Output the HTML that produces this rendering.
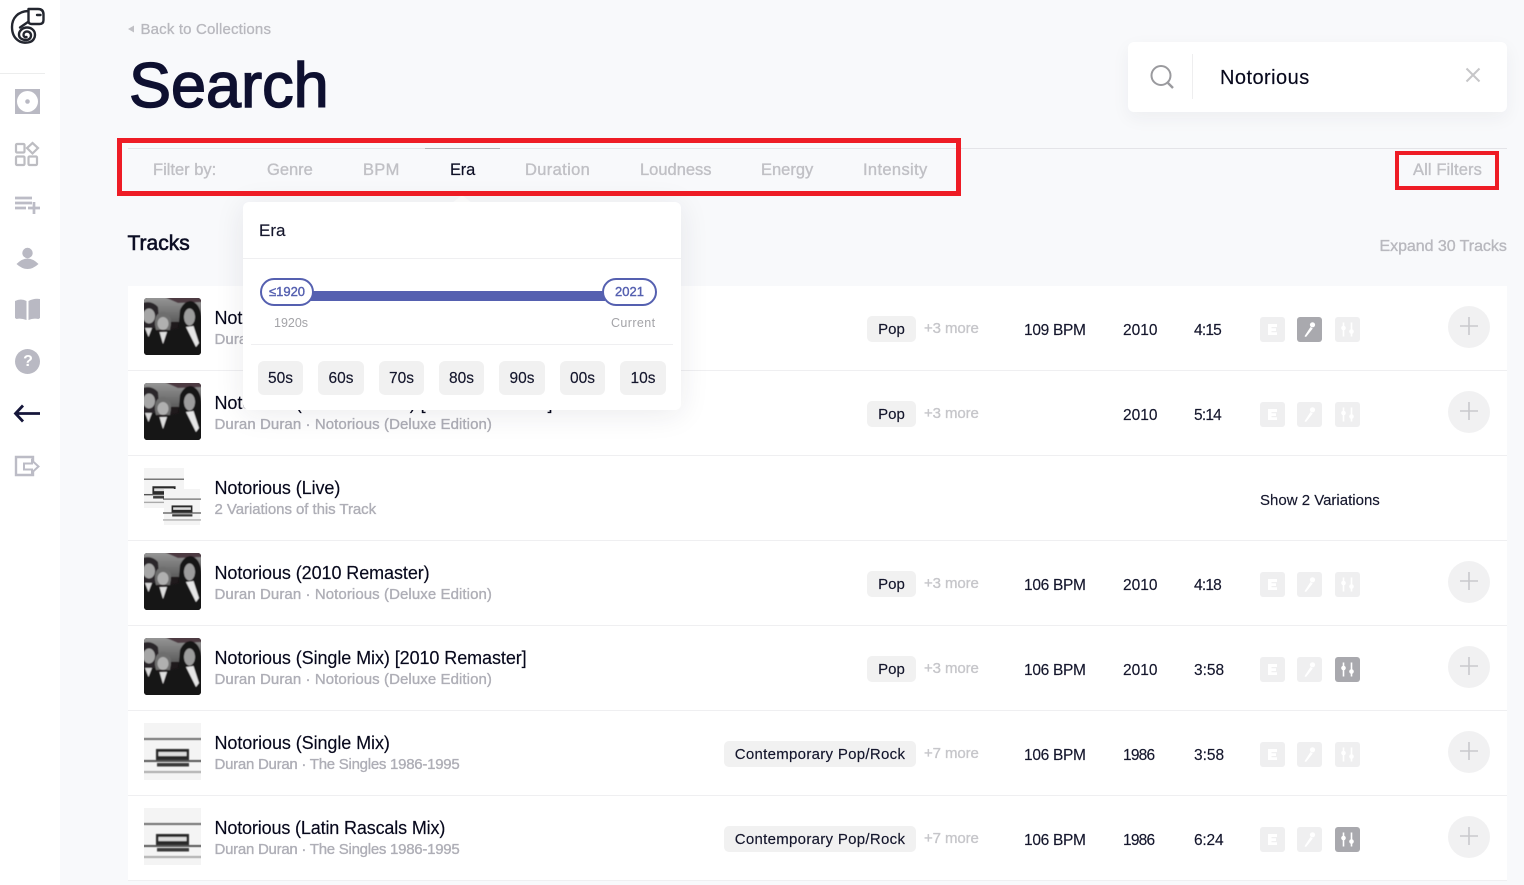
<!DOCTYPE html>
<html><head><meta charset="utf-8"><title>Search</title>
<style>
html,body{margin:0;padding:0}
body{width:1524px;height:885px;overflow:hidden;background:#f8f9fb;position:relative;font-family:"Liberation Sans",sans-serif;color:#0c0e24}
.a,.a *{position:absolute;white-space:nowrap}
.side{left:0;top:0;width:60px;height:885px;background:#fff}
.tab{top:161px;font-size:16.5px;line-height:18px;color:#c0c0c5;-webkit-text-stroke:.35px #c0c0c5}
.card{left:128px;top:286px;width:1379px;height:595px;background:#fff}
.r{left:0;width:1379px;height:85px;border-bottom:1px solid #efeff1;box-sizing:border-box}
.th{left:16px;top:12px;width:57px;height:57px}
.t{left:86.5px;top:21px;font-size:18px;line-height:22px;color:#07081c;letter-spacing:-.08px;-webkit-text-stroke:.15px #07081c}
.s{left:86.5px;top:45px;font-size:15px;line-height:18px;color:#aeaeb6;letter-spacing:.08px;-webkit-text-stroke:.35px #aeaeb6}
.s.n{letter-spacing:-.26px}
.s.v{letter-spacing:-.06px}
.tag{top:30px;height:26px;border-radius:5px;background:#f1f1f1;font-size:15px;line-height:28px;text-align:center;color:#14162c;-webkit-text-stroke:.15px #14162c}
.tag.w{letter-spacing:.3px}
.m{left:796px;top:34px;font-size:15px;line-height:18px;color:#c6c6ca;letter-spacing:-.1px;-webkit-text-stroke:.35px #c6c6ca}
.b,.y,.d{top:36px;font-size:15.5px;line-height:18px;color:#14162c;-webkit-text-stroke:.15px #14162c}
.b{left:896px;letter-spacing:-.3px}.y{left:995px}.d{left:1066px}
.nr{letter-spacing:-.8px}
.ic{top:31px;width:25px;height:25px;border-radius:3px;background:#efeff0}
.ic.on{background:#a9a9ae}
.e{left:1132px}.mi{left:1169px}.mx{left:1207px}
.pl{left:1320px;top:20px;width:42px;height:42px;border-radius:50%;background:#f1f1f2}
.pill{top:361px;height:34px;border-radius:6px;background:#f1f1f1;font-size:15.5px;line-height:36px;text-align:center;color:#14162c;-webkit-text-stroke:.15px #14162c}
</style></head><body>
<svg width="0" height="0" style="position:absolute"><defs>
<linearGradient id="g1" x1="0" y1="0" x2="0" y2="1"><stop offset="0" stop-color="#9a9a9a"/><stop offset="1" stop-color="#5c5c5c"/></linearGradient>
<filter id="bl" x="-5%" y="-5%" width="110%" height="110%"><feGaussianBlur stdDeviation=".55"/></filter>
<filter id="bl2" x="-5%" y="-5%" width="110%" height="110%"><feGaussianBlur stdDeviation=".45"/></filter>
<clipPath id="cp"><rect width="57" height="57" rx="3"/></clipPath>
<symbol id="photo" viewBox="0 0 57 57">
<g clip-path="url(#cp)">
<rect width="57" height="57" fill="#1f1a1c"/>
<g filter="url(#bl)">
<path d="M-2 -2H59V24H-2Z" fill="url(#g1)"/><path d="M18 -2H59V4L34 5Z" fill="#4d3a42"/>
<path d="M-2 28L8 26L14 34L26 32L35 30V59H-2Z" fill="#191416"/>
<path d="M-2 5Q8 2 14 9L15 22L12 30H-2Z" fill="#2c282a"/>
<ellipse cx="5" cy="18" rx="6" ry="7.500" fill="#a6a6a6"/>
<path d="M11 27Q10 15 19 14Q28 15 27 27L26 32H12Z" fill="#6e6e6e"/>
<ellipse cx="19" cy="25.500" rx="5.500" ry="6.500" fill="#b0b0b0"/>
<path d="M32 59L36 12Q40 3 47 3Q55 5 57 16L59 30V59Z" fill="#171214"/>
<ellipse cx="45.500" cy="19" rx="5.500" ry="8.500" fill="#9c9c9c"/>
<path d="M1 30L8 30L4.500 39Z" fill="#d8d8d8"/><path d="M15.500 34L23 34L19 46Z" fill="#dedede"/>
<path d="M42 29L49.500 28L55 45L52 49Z" fill="#e6e6e6"/>
</g></g>
</symbol>
<symbol id="rec" viewBox="0 0 57 57">
<rect width="57" height="57" fill="#f4f4f4"/>
<g filter="url(#bl2)">
<rect x="-2" y="15" width="61" height="2" fill="#6f6f6f"/>
<rect x="12" y="26" width="33" height="12" fill="#2a2a2a"/><rect x="14.500" y="29" width="28" height="4" fill="#ddd"/>
<rect x="-2" y="37" width="61" height="2" fill="#555"/><rect x="13" y="40" width="32" height="3.500" fill="#3a3a3a"/>
<rect x="-2" y="48" width="61" height="2" fill="#aaa"/>
</g>
</symbol>
<symbol id="E" viewBox="0 0 25 25"><path d="M8 7H17V10H11.500V11.300H16V14H11.500V15.200H17V18H8Z" fill="#fff"/></symbol>
<symbol id="Mic" viewBox="0 0 25 25"><circle cx="15.500" cy="7.800" r="2.600" fill="#fff"/><path d="M13.500 10L15.800 11.500L9 20L7.500 19.200Z" fill="#fff"/></symbol>
<symbol id="Mx" viewBox="0 0 25 25"><path d="M8.500 5.500V19.500M16.500 5.500V19.500" stroke="#fff" stroke-width="1.600"/><circle cx="8.500" cy="11" r="2.300" fill="#fff"/><circle cx="16.500" cy="14.500" r="2.300" fill="#fff"/></symbol>
<symbol id="Pl" viewBox="0 0 42 42"><path d="M21 11V29M12 20H30" stroke="#c9c9cc" stroke-width="1.600"/></symbol>
</defs></svg>

<div class="a side">
<svg style="left:0;top:0" width="60" height="490" fill="none">
<g stroke="#23262f" stroke-width="2.400" stroke-linecap="round" stroke-linejoin="round">
<path d="M28.500 9H38Q43.500 9 43.500 14.500V20Q43.500 24 39.500 24H31.500Q28.500 24 28.500 21V9"/>
<path d="M37 15H40.500"/>
<path d="M28 11C18 11.500 12 18 12 27C12 33 14 38 19 41C22 43 27 43 30 42C33 41 35 38 35 35C35 30 31 27.500 27 27.500C22.500 27.500 19 31 19 34.500C19 38 22 40 26 40C29 40 31 38 31 35.500C31 33 29 31.500 27 31.500C25 31.500 23.500 33 23.500 35C23.500 36.500 25 37.500 26.500 37"/>
<path d="M20 27.500L28 22"/>
</g>
<rect x="0" y="73" width="45" height="1" fill="#eceded"/>
<rect x="15" y="89" width="25" height="25" fill="#b9b9c3"/><circle cx="27.500" cy="101.500" r="10.500" fill="#fff"/><circle cx="27.500" cy="101.500" r="2.300" fill="#b9b9c3"/>
<g stroke="#bdbdc2" stroke-width="2.200">
<rect x="16" y="144" width="8.500" height="8.500" rx="1"/><rect x="16" y="156.500" width="8.500" height="8.500" rx="1"/><rect x="28.500" y="156.500" width="8.500" height="8.500" rx="1"/>
<path d="M32.500 143L38 148L32.500 153.500L27 148Z"/>
</g>
<g stroke="#bcbcc6" stroke-width="2.700"><path d="M15 198H32M15 203H32M15 208H26M28 208H40M34 202V214"/></g>
<circle cx="27.500" cy="253" r="5.200" fill="#b9b9c3"/><path d="M16.500 264Q27.500 253 38.500 264Q27.500 274 16.500 264Z" fill="#b9b9c3"/>
<path d="M15 301Q21 298 26.500 301V320Q21 318 16.500 319L15 318ZM28.500 301Q34 298 40 299V318L38.500 319Q33 318 28.500 320Z" fill="#b9b9c3"/>
<circle cx="27.500" cy="361.500" r="12.500" fill="#b9b9c3"/>
<path d="M15.500 413.500H40M23 405.500L15.500 413.500L23 421.500" stroke="#15163a" stroke-width="2.800"/>
<path d="M33 461V457H16V475H33V471" stroke="#bcbcc6" stroke-width="2.400"/>
<path d="M24 463.500H32V460.500L38.500 466.500L32 472.500V469.500H24Z" stroke="#bcbcc6" stroke-width="2"/>
</svg>
<span style="left:22px;top:353px;width:12px;text-align:center;font-size:16px;line-height:18px;font-weight:bold;color:#fff">?</span>
</div>

<div class="a" style="left:0;top:0">
<svg style="left:127px;top:25px" width="8" height="8"><path d="M1 4L7 .5V7.500Z" fill="#c0c0c5"/></svg>
<span style="left:140.500px;top:21px;font-size:15px;line-height:18px;color:#b8b8be;letter-spacing:.16px;-webkit-text-stroke:.3px #b8b8be">Back to Collections</span>
<span style="left:129px;top:50px;font-size:63px;line-height:72px;color:#0e1030;-webkit-text-stroke:1.500px #0e1030">Search</span>

<div style="left:1128px;top:42px;width:379px;height:70px;background:#fff;border-radius:6px;box-shadow:0 6px 18px rgba(30,30,60,.05)"></div>
<svg style="left:1140px;top:55px" width="40" height="40" fill="none"><circle cx="21" cy="20.500" r="9.500" stroke="#9a9a9e" stroke-width="2"/><path d="M28 28L33 33" stroke="#9a9a9e" stroke-width="2.400"/></svg>
<div style="left:1192px;top:54px;width:1px;height:45px;background:#eeeeef"></div>
<span style="left:1220px;top:66px;font-size:20px;line-height:24px;color:#07081c;letter-spacing:.45px;-webkit-text-stroke:.15px #07081c">Notorious</span>
<svg style="left:1464px;top:66px" width="18" height="18"><path d="M2.500 2.500L15.500 15.500M15.500 2.500L2.500 15.500" stroke="#c6c6c8" stroke-width="2"/></svg>

<div style="left:128px;top:148px;width:1379px;height:1px;background:#e4e4e8"></div>
<div style="left:425px;top:148px;width:75px;height:1px;background:#b4b4b8"></div>
<span class="tab" style="left:153px">Filter by:</span>
<span class="tab" style="left:267px">Genre</span>
<span class="tab" style="left:363px;letter-spacing:.3px">BPM</span>
<span class="tab" style="left:450px;color:#0c0e24;-webkit-text-stroke:.15px #0c0e24;letter-spacing:-.2px">Era</span>
<span class="tab" style="left:525px;letter-spacing:.35px">Duration</span>
<span class="tab" style="left:640px">Loudness</span>
<span class="tab" style="left:761px">Energy</span>
<span class="tab" style="left:863px;letter-spacing:.35px">Intensity</span>
<span class="tab" style="left:1413px;letter-spacing:.1px">All Filters</span>

<span style="left:127.500px;top:232px;font-size:21px;line-height:24px;color:#0c0e24;-webkit-text-stroke:.6px #0c0e24">Tracks</span>
<span style="left:1379.500px;top:238px;font-size:16px;line-height:18px;color:#b8b8be;letter-spacing:-.05px;-webkit-text-stroke:.35px #b8b8be">Expand 30 Tracks</span>
</div>

<div class="a card">
<div class="r" style="top:0"><svg class="th"><use href="#photo" width="57" height="57"/></svg><span class="t">Notorious</span><span class="s">Duran Duran · Notorious (Deluxe Edition)</span>
<span class="tag" style="left:739px;width:49px">Pop</span><span class="m">+3 more</span><span class="b">109 BPM</span><span class="y">2010</span><span class="d nr">4:15</span>
<svg class="ic e"><use href="#E"/></svg><svg class="ic mi on"><use href="#Mic"/></svg><svg class="ic mx"><use href="#Mx"/></svg><svg class="pl"><use href="#Pl"/></svg></div>

<div class="r" style="top:85px"><svg class="th"><use href="#photo" width="57" height="57"/></svg><span class="t">Notorious (Extended Mix) [2010 Remaster]</span><span class="s">Duran Duran · Notorious (Deluxe Edition)</span>
<span class="tag" style="left:739px;width:49px">Pop</span><span class="m">+3 more</span><span class="y">2010</span><span class="d nr">5:14</span>
<svg class="ic e"><use href="#E"/></svg><svg class="ic mi"><use href="#Mic"/></svg><svg class="ic mx"><use href="#Mx"/></svg><svg class="pl"><use href="#Pl"/></svg></div>

<div class="r" style="top:170px"><svg style="left:16px;top:12px;width:40px;height:40px"><use href="#rec" width="40" height="40"/></svg><svg style="left:35px;top:33px;width:38px;height:36px"><use href="#rec" width="38" height="36"/></svg><span class="t">Notorious (Live)</span><span class="s v">2 Variations of this Track</span>
<span style="left:1132px;top:36px;font-size:15px;line-height:18px;color:#14162c;-webkit-text-stroke:.15px #14162c">Show 2 Variations</span></div>

<div class="r" style="top:255px"><svg class="th"><use href="#photo" width="57" height="57"/></svg><span class="t">Notorious (2010 Remaster)</span><span class="s">Duran Duran · Notorious (Deluxe Edition)</span>
<span class="tag" style="left:739px;width:49px">Pop</span><span class="m">+3 more</span><span class="b">106 BPM</span><span class="y">2010</span><span class="d nr">4:18</span>
<svg class="ic e"><use href="#E"/></svg><svg class="ic mi"><use href="#Mic"/></svg><svg class="ic mx"><use href="#Mx"/></svg><svg class="pl"><use href="#Pl"/></svg></div>

<div class="r" style="top:340px"><svg class="th"><use href="#photo" width="57" height="57"/></svg><span class="t">Notorious (Single Mix) [2010 Remaster]</span><span class="s">Duran Duran · Notorious (Deluxe Edition)</span>
<span class="tag" style="left:739px;width:49px">Pop</span><span class="m">+3 more</span><span class="b">106 BPM</span><span class="y">2010</span><span class="d">3:58</span>
<svg class="ic e"><use href="#E"/></svg><svg class="ic mi"><use href="#Mic"/></svg><svg class="ic mx on"><use href="#Mx"/></svg><svg class="pl"><use href="#Pl"/></svg></div>

<div class="r" style="top:425px"><svg class="th"><use href="#rec" width="57" height="57"/></svg><span class="t">Notorious (Single Mix)</span><span class="s n">Duran Duran · The Singles 1986-1995</span>
<span class="tag w" style="left:596px;width:192px">Contemporary Pop/Rock</span><span class="m">+7 more</span><span class="b">106 BPM</span><span class="y nr">1986</span><span class="d">3:58</span>
<svg class="ic e"><use href="#E"/></svg><svg class="ic mi"><use href="#Mic"/></svg><svg class="ic mx"><use href="#Mx"/></svg><svg class="pl"><use href="#Pl"/></svg></div>

<div class="r" style="top:510px"><svg class="th"><use href="#rec" width="57" height="57"/></svg><span class="t" style="letter-spacing:-.15px">Notorious (Latin Rascals Mix)</span><span class="s n">Duran Duran · The Singles 1986-1995</span>
<span class="tag w" style="left:596px;width:192px">Contemporary Pop/Rock</span><span class="m">+7 more</span><span class="b">106 BPM</span><span class="y nr">1986</span><span class="d" style="letter-spacing:-.2px">6:24</span>
<svg class="ic e"><use href="#E"/></svg><svg class="ic mi"><use href="#Mic"/></svg><svg class="ic mx on"><use href="#Mx"/></svg><svg class="pl"><use href="#Pl"/></svg></div>
</div>

<div class="a" style="left:0;top:0">
<svg style="left:452px;top:195px" width="20" height="8"><path d="M0 8L10 0L20 8Z" fill="#fff"/></svg>
<div style="left:243px;top:202px;width:438px;height:208px;background:#fff;border-radius:6px;box-shadow:0 4px 30px rgba(30,30,60,.09)"></div>
<span style="left:259px;top:221px;font-size:17px;line-height:20px;color:#14162c;-webkit-text-stroke:.15px #14162c">Era</span>
<div style="left:243px;top:258px;width:438px;height:1px;background:#efeff1"></div>
<div style="left:310px;top:291px;width:295px;height:10px;background:#5560b0"></div>
<div style="left:260px;top:278px;width:54px;height:28px;box-sizing:border-box;border:2px solid #5560b0;border-radius:14px;background:#fff;font-size:13px;line-height:24px;text-align:center;color:#5560b0;-webkit-text-stroke:.4px #5560b0">≤1920</div>
<div style="left:602px;top:278px;width:55px;height:28px;box-sizing:border-box;border:2px solid #5560b0;border-radius:14px;background:#fff;font-size:13px;line-height:24px;text-align:center;color:#5560b0;-webkit-text-stroke:.4px #5560b0">2021</div>
<span style="left:274px;top:316px;font-size:12.500px;line-height:15px;color:#a4a4a8">1920s</span>
<span style="left:611px;top:316px;font-size:12.500px;line-height:15px;color:#a4a4a8;letter-spacing:.4px">Current</span>
<div style="left:251px;top:344px;width:422px;height:1px;background:#efeff1"></div>
<div class="pill" style="left:258px;width:45px">50s</div>
<div class="pill" style="left:318px;width:46px">60s</div>
<div class="pill" style="left:379px;width:45px">70s</div>
<div class="pill" style="left:439px;width:45px">80s</div>
<div class="pill" style="left:499px;width:46px">90s</div>
<div class="pill" style="left:560px;width:45px">00s</div>
<div class="pill" style="left:620px;width:46px">10s</div>

<div style="left:117px;top:138px;width:844px;height:58px;box-sizing:border-box;border:5px solid #ee1c25"></div>
<div style="left:1395px;top:151px;width:104px;height:39px;box-sizing:border-box;border:4.500px solid #ee1c25"></div>
</div>
</body></html>
